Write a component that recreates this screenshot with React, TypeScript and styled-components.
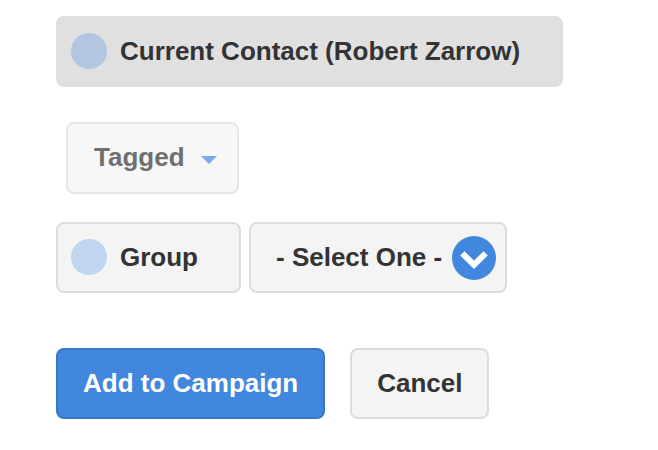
import React, { useState } from "react";
import styled, { createGlobalStyle, css } from "styled-components";

const GlobalStyle = createGlobalStyle`
  * { box-sizing: border-box; }
  body {
    margin: 0;
    background: #ffffff;
    color: #333333;
    font-family: "Liberation Sans", Arial, Helvetica, sans-serif;
    font-size: 26px;
    font-weight: 700;
    line-height: 32px;
  }
`;

const Form = styled.form`
  display: flex;
  flex-direction: column;
  align-items: flex-start;
  padding: 16px 56px;
`;

const Row = styled.div<{ $gap?: number; $top?: number; $inset?: number }>`
  display: flex;
  gap: ${(p) => p.$gap ?? 0}px;
  margin-top: ${(p) => p.$top ?? 0}px;
  padding-left: ${(p) => p.$inset ?? 0}px;
`;

const box = css`
  height: 71px;
  border: 2px solid #dcdcdc;
  border-radius: 8px;
  background: #f4f4f4;
  color: inherit;
  font: inherit;
  white-space: nowrap;
`;

const Choice = styled.label<{ $active: boolean }>`
  ${box}
  display: flex;
  align-items: center;
  gap: 13px;
  padding: 0 41px 2px 13px;
  cursor: pointer;
  ${(p) => p.$active && css`
    background: #e0e0e0;
    border-color: #dedede;
  `}
`;

const Radio = styled.input`
  appearance: none;
  flex: none;
  width: 36px;
  height: 36px;
  margin: 0;
  border-radius: 50%;
  background: #bfd5f0;
  cursor: pointer;
  &:checked { background: #b0c6e1; }
`;

const TagButton = styled.button`
  ${box}
  display: flex;
  align-items: center;
  gap: 16px;
  height: 72px;
  padding: 0 20px 2px 26px;
  opacity: 0.7;
`;

const SelectWrap = styled.div`
  position: relative;
  display: flex;
`;

const Select = styled.select`
  ${box}
  appearance: none;
  padding: 0 62px 2px 25px;
  cursor: pointer;
`;

const SelectIcon = styled.svg`
  position: absolute;
  top: 14px;
  right: 11px;
  pointer-events: none;
`;

const Action = styled.button<{ $primary?: boolean }>`
  ${box}
  padding: 0 25px 2px;
  cursor: pointer;
  ${(p) => p.$primary && css`
    background: #4187de;
    border-color: #3777ca;
    color: #ffffff;
  `}
`;

export default function App() {
  const [target, setTarget] = useState("contact");
  return (
    <>
      <GlobalStyle />
      <Form onSubmit={(e) => e.preventDefault()}>
        <Choice $active={target === "contact"}>
          <Radio type="radio" name="target" checked={target === "contact"} onChange={() => setTarget("contact")} />
          Current Contact (Robert Zarrow)
        </Choice>
        <Row $top={35} $inset={10}>
          <TagButton type="button" disabled>
            Tagged
            <svg width="16" height="14" viewBox="0 0 16 14" aria-hidden="true">
              <path d="M0 6H16L8 14Z" fill="#3f87e8" />
            </svg>
          </TagButton>
        </Row>
        <Row $top={28} $gap={8}>
          <Choice $active={target === "group"}>
            <Radio type="radio" name="target" checked={target === "group"} onChange={() => setTarget("group")} />
            Group
          </Choice>
          <SelectWrap>
            <Select aria-label="Group name">
              <option>- Select One -</option>
            </Select>
            <SelectIcon width="44" height="44" viewBox="0 0 44 44" aria-hidden="true">
              <circle cx="22" cy="22" r="22" fill="#4187de" />
              <path d="M10.3 17.3L22 28.8L33.7 17.3" fill="none" stroke="#fff" strokeWidth="6" />
            </SelectIcon>
          </SelectWrap>
        </Row>
        <Row $top={55} $gap={25}>
          <Action type="submit" $primary>Add to Campaign</Action>
          <Action type="button">Cancel</Action>
        </Row>
      </Form>
    </>
  );
}
